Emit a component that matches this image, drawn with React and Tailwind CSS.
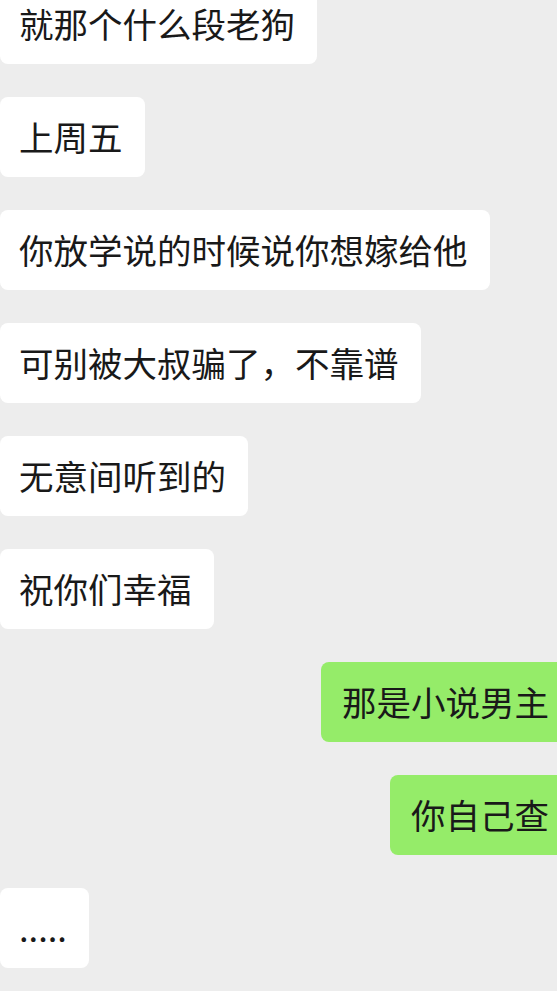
const messages = [
  { side: 'left', text: '就那个什么段老狗' },
  { side: 'left', text: '上周五' },
  { side: 'left', text: '你放学说的时候说你想嫁给他' },
  { side: 'left', text: '可别被大叔骗了，不靠谱' },
  { side: 'left', text: '无意间听到的' },
  { side: 'left', text: '祝你们幸福' },
  { side: 'right', text: '那是小说男主' },
  { side: 'right', text: '你自己查' },
  { side: 'left', text: '.....' },
];

const Bubble = ({ side, text }) => {
  if (side === 'right') {
    return (
      <div className="flex justify-end">
        <div className="mr-[-14px] h-[80px] flex items-center rounded-[8px] bg-[#95ec69] pl-[21px] pr-[22px] text-[34.5px] text-[#191919]">
          {text}
        </div>
      </div>
    );
  }
  return (
    <div className="flex justify-start">
      <div className="h-[80px] flex items-center rounded-[8px] bg-white pl-[19px] pr-[22px] text-[34.5px] text-[#191919]">
        {text}
      </div>
    </div>
  );
};

export default function App() {
  return (
    <div
      className="w-[557px] h-[991px] overflow-hidden bg-[#ededed]"
      style={{ fontFamily: '"Noto Sans CJK SC", "Noto Sans", sans-serif' }}
    >
      <div className="mt-[-16px] flex flex-col gap-[33px]">
        {messages.map((m, i) => (
          <Bubble key={i} side={m.side} text={m.text} />
        ))}
      </div>
    </div>
  );
}
